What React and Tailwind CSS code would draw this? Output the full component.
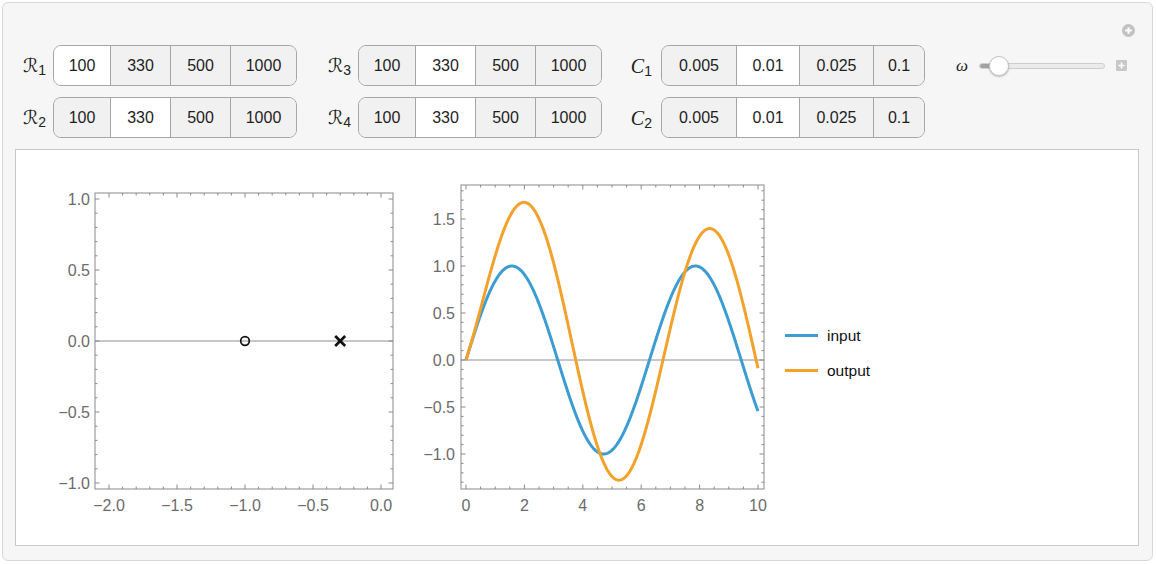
import React from 'react'

const BLUE = '#3d9dd2'
const ORANGE = '#f2a22b'

function Setter({ options, widths, selected }) {
  return (
    <div className="flex h-[41px] overflow-hidden rounded-[8px] border border-[#a6a6a6] bg-[#f1f1f1]">
      {options.map((option, i) => (
        <div
          key={option}
          className={[
            'flex h-full items-center justify-center text-[16px] text-[#1e1e1e]',
            widths[i],
            i > 0 ? 'border-l border-[#a6a6a6]' : '',
            i === selected ? 'bg-white' : 'bg-[#f1f1f1]',
          ].join(' ')}
        >
          {option}
        </div>
      ))}
    </div>
  )
}

function Label({ main, sub, className, italic }) {
  return (
    <div className={['flex items-baseline justify-end', className].join(' ')}>
      <span
        className={['leading-none text-[#222]', italic ? 'text-[20px] italic' : 'text-[19px]'].join(' ')}
        style={{ fontFamily: italic ? '"Liberation Serif", serif' : '"DejaVu Sans", "Noto Sans", sans-serif' }}
      >
        {main}
      </span>
      <span className="relative top-[3px] text-[14px] leading-none text-[#222]">{sub}</span>
    </div>
  )
}

const R_OPTS = ['100', '330', '500', '1000']
const R_W = ['w-[56px]', 'w-[60px]', 'w-[60px]', 'w-[66px]']
const C_OPTS = ['0.005', '0.01', '0.025', '0.1']
const C_W = ['w-[74px]', 'w-[63px]', 'w-[74px]', 'w-[51px]']

function ticks(from, to, step) {
  const out = []
  const n = Math.round((to - from) / step)
  for (let i = 0; i <= n; i++) out.push(+(from + i * step).toFixed(3))
  return out
}

function Frame({ x0, x1, y0, y1, xMajor, xMinor, yMajor, yMinor, mx, my }) {
  const lines = []
  const isMajor = (v, arr) => arr.some((m) => Math.abs(m - v) < 1e-6)
  xMinor.forEach((v) => {
    const px = mx(v)
    if (px < x0 + 0.5 || px > x1 - 0.5) return
    const len = isMajor(v, xMajor) ? 4.5 : 2.5
    lines.push(<line key={'xb' + v} x1={px} x2={px} y1={y1} y2={y1 - len} />)
    lines.push(<line key={'xt' + v} x1={px} x2={px} y1={y0} y2={y0 + len} />)
  })
  yMinor.forEach((v) => {
    const py = my(v)
    if (py < y0 + 0.5 || py > y1 - 0.5) return
    const len = isMajor(v, yMajor) ? 4.5 : 2.5
    lines.push(<line key={'yl' + v} y1={py} y2={py} x1={x0} x2={x0 + len} />)
    lines.push(<line key={'yr' + v} y1={py} y2={py} x1={x1} x2={x1 - len} />)
  })
  return (
    <g stroke="#8a8a8a" strokeWidth="1" fill="none">
      <rect x={x0} y={y0} width={x1 - x0} height={y1 - y0} />
      {lines}
    </g>
  )
}

const fmt = (v) => (v < 0 ? '\u2212' + Math.abs(v).toFixed(1) : v.toFixed(1))

function PoleZeroPlot() {
  const mx = (x) => 326 + 136 * x
  const my = (y) => 161 - 142 * y
  const xMajor = [-2, -1.5, -1, -0.5, 0]
  const yMajor = [-1, -0.5, 0, 0.5, 1]
  return (
    <svg width="355" height="340" className="shrink-0">
      <line x1={40} x2={338} y1={my(0)} y2={my(0)} stroke="#8e8e8e" strokeWidth="1" />
      <Frame
        x0={40}
        x1={338}
        y0={13}
        y1={309}
        xMajor={xMajor}
        xMinor={ticks(-2.1, 0.1, 0.1)}
        yMajor={yMajor}
        yMinor={ticks(-1.1, 1.1, 0.1)}
        mx={mx}
        my={my}
      />
      <g fill="#6b6b6b" fontSize="16" style={{ fontFamily: '"Liberation Sans", Arial, sans-serif' }}>
        {yMajor.map((v) => (
          <text key={'y' + v} x={35} y={my(v) + 5.5} textAnchor="end">
            {fmt(v)}
          </text>
        ))}
        {xMajor.map((v) => (
          <text key={'x' + v} x={mx(v)} y={331} textAnchor="middle">
            {fmt(v)}
          </text>
        ))}
      </g>
      <circle cx={mx(-1)} cy={my(0)} r="4.3" fill="none" stroke="#111" strokeWidth="1.7" />
      <g stroke="#111" strokeWidth="2.6">
        <line x1={mx(-0.3) - 5} x2={mx(-0.3) + 5} y1={my(0) - 5} y2={my(0) + 5} />
        <line x1={mx(-0.3) - 5} x2={mx(-0.3) + 5} y1={my(0) + 5} y2={my(0) - 5} />
      </g>
    </svg>
  )
}

function ResponsePlot() {
  const mx = (t) => 46 + 29.2 * t
  const my = (y) => 180 - 94 * y
  const path = (f) => {
    const pts = []
    for (let i = 0; i <= 400; i++) {
      const t = (i / 400) * 10
      pts.push((i ? 'L' : 'M') + mx(t).toFixed(2) + ' ' + my(f(t)).toFixed(2))
    }
    return pts.join(' ')
  }
  const input = (t) => Math.sin(t)
  const output = (t) => 1.37 * Math.sin(t - 0.5) + 0.66 * Math.exp(-t / 2.65)
  const xMajor = [0, 2, 4, 6, 8, 10]
  const yMajor = [-1, -0.5, 0, 0.5, 1, 1.5]
  return (
    <svg width="355" height="340" className="shrink-0">
      <line x1={41} x2={344} y1={my(0)} y2={my(0)} stroke="#8e8e8e" strokeWidth="1" />
      <Frame
        x0={41}
        x1={344}
        y0={5}
        y1={309}
        xMajor={xMajor}
        xMinor={ticks(0, 10, 0.5)}
        yMajor={yMajor}
        yMinor={ticks(-1.3, 1.8, 0.1)}
        mx={mx}
        my={my}
      />
      <g fill="#6b6b6b" fontSize="16" style={{ fontFamily: '"Liberation Sans", Arial, sans-serif' }}>
        {yMajor.map((v) => (
          <text key={'y' + v} x={35} y={my(v) + 5.5} textAnchor="end">
            {fmt(v)}
          </text>
        ))}
        {xMajor.map((v) => (
          <text key={'x' + v} x={mx(v)} y={331} textAnchor="middle">
            {v}
          </text>
        ))}
      </g>
      <path d={path(input)} fill="none" stroke={BLUE} strokeWidth="3" strokeLinejoin="round" />
      <path d={path(output)} fill="none" stroke={ORANGE} strokeWidth="3" strokeLinejoin="round" />
    </svg>
  )
}

export default function App() {
  return (
    <div className="h-[564px] w-[1156px] bg-white pl-[2px] pt-[2px]" style={{ fontFamily: '"Liberation Sans", Arial, sans-serif' }}>
      <div className="relative h-[559px] w-[1151px] rounded-[6px] border border-[#d8d8d8] bg-[#f6f6f6]">
        <svg className="absolute right-[17px] top-[21px]" width="13" height="13" viewBox="0 0 13 13">
          <circle cx="6.5" cy="6.5" r="6.5" fill="#c2c2c2" />
          <path d="M6.5 3.2v6.6M3.2 6.5h6.6" stroke="white" strokeWidth="2" />
        </svg>

        <div className="flex pl-[17px] pt-[42px]">
          <div className="flex flex-col gap-[11px]">
            <div className="flex items-center">
              <Label main="ℛ" sub="1" className="w-[33px] pr-[7px]" />
              <Setter options={R_OPTS} widths={R_W} selected={0} />
            </div>
            <div className="flex items-center">
              <Label main="ℛ" sub="2" className="w-[33px] pr-[7px]" />
              <Setter options={R_OPTS} widths={R_W} selected={1} />
            </div>
          </div>

          <div className="flex flex-col gap-[11px]">
            <div className="flex items-center">
              <Label main="ℛ" sub="3" className="w-[61px] pr-[7px]" />
              <Setter options={R_OPTS} widths={R_W} selected={1} />
            </div>
            <div className="flex items-center">
              <Label main="ℛ" sub="4" className="w-[61px] pr-[7px]" />
              <Setter options={R_OPTS} widths={R_W} selected={1} />
            </div>
          </div>

          <div className="flex flex-col gap-[11px]">
            <div className="flex items-center">
              <Label main="C" sub="1" italic className="w-[59px] pr-[9px]" />
              <Setter options={C_OPTS} widths={C_W} selected={1} />
            </div>
            <div className="flex items-center">
              <Label main="C" sub="2" italic className="w-[59px] pr-[9px]" />
              <Setter options={C_OPTS} widths={C_W} selected={1} />
            </div>
          </div>

          <div className="ml-[31px] flex h-[41px] items-center">
            <span className="w-[12px] text-[17px] italic leading-none text-[#222]" style={{ fontFamily: '"Liberation Serif", serif' }}>
              ω
            </span>
            <div className="relative ml-[11px] h-[6px] w-[126px] rounded-full border border-[#cfcfcf] bg-[#ebebeb]">
              <div className="h-full w-[19px] rounded-full bg-[#a2a2a2]" />
              <div className="absolute left-[9px] top-[-8px] h-[20px] w-[20px] rounded-full border border-[#c4c4c4] bg-white shadow-[0_1px_2px_rgba(0,0,0,0.25)]" />
            </div>
            <svg className="ml-[11px]" width="11" height="11" viewBox="0 0 11 11">
              <rect width="11" height="11" rx="1" fill="#c8c8c8" />
              <path d="M5.5 2.5v6M2.5 5.5h6" stroke="white" strokeWidth="1.6" />
            </svg>
          </div>
        </div>

        <div className="ml-[12px] mt-[11px] flex h-[397px] w-[1124px] border border-[#c8c8c8] bg-white pl-[39px] pt-[30px]">
          <PoleZeroPlot />
          <div className="ml-[10px]">
            <ResponsePlot />
          </div>
          <div className="ml-[10px] flex flex-col pt-[138px]">
            <div className="flex h-[35px] items-center">
              <div className="h-[3px] w-[33px]" style={{ background: BLUE }} />
              <span className="ml-[9px] text-[15.5px] text-[#111]">input</span>
            </div>
            <div className="flex h-[35px] items-center">
              <div className="h-[3px] w-[33px]" style={{ background: ORANGE }} />
              <span className="ml-[9px] text-[15.5px] text-[#111]">output</span>
            </div>
          </div>
        </div>
      </div>
    </div>
  )
}
